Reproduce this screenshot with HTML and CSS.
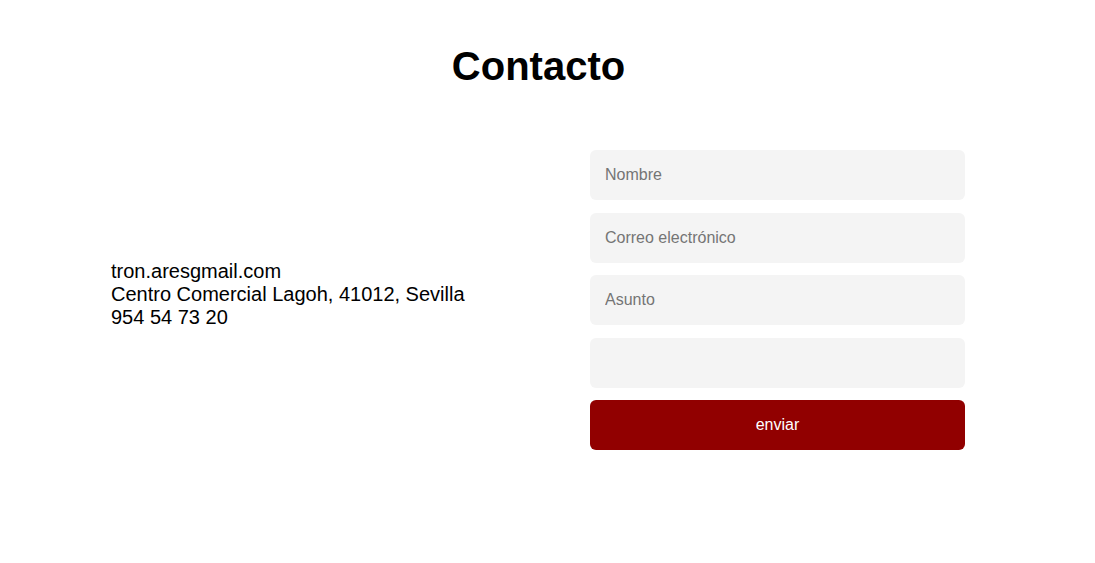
FILE: index.html
```html
<!DOCTYPE html>
<html lang="es">
<head>
<meta charset="utf-8">
<title>Contacto</title>
<link rel="stylesheet" href="styles.css">
</head>
<body>
<main class="contact">
  <h1 class="contact-title">Contacto</h1>
  <div class="contact-body">
    <div class="contact-info">
      <p>tron.aresgmail.com</p>
      <p>Centro Comercial Lagoh, 41012, Sevilla</p>
      <p>954 54 73 20</p>
    </div>
    <form class="contact-form">
      <input class="field" type="text" placeholder="Nombre">
      <input class="field" type="email" placeholder="Correo electrónico">
      <input class="field" type="text" placeholder="Asunto">
      <input class="field" type="text">
      <button class="send" type="button">enviar</button>
    </form>
  </div>
</main>
</body>
</html>
```

FILE: styles.css
```css
* { box-sizing: border-box; }
html, body { margin: 0; padding: 0; background: #fff; }
body {
  font-family: "Liberation Sans", Arial, sans-serif;
  color: #000;
}
.contact-title {
  margin: 43px 0 0;
  padding-right: 18px;
  text-align: center;
  font-size: 40px;
  font-weight: 700;
  line-height: 46px;
}
.contact-body {
  display: flex;
  align-items: center;
  margin-top: 61px;
  padding: 0 130px 0 111px;
}
.contact-info {
  flex: 1;
  font-size: 20px;
  line-height: 23px;
  padding-bottom: 12px;
}
.contact-info p { margin: 0; }
.contact-form {
  width: 375px;
  display: flex;
  flex-direction: column;
  gap: 12.5px;
}
.field {
  height: 50px;
  border: none;
  border-radius: 6px;
  background: #f4f4f4;
  padding: 0 15px;
  font-family: "Liberation Sans", Arial, sans-serif;
  font-size: 16px;
  color: #333;
  outline: none;
}
.field::placeholder { color: #757575; }
.send {
  height: 50px;
  border: none;
  border-radius: 6px;
  background: #910000;
  color: #fff;
  font-family: "Liberation Sans", Arial, sans-serif;
  font-size: 16px;
  cursor: pointer;
}
```
